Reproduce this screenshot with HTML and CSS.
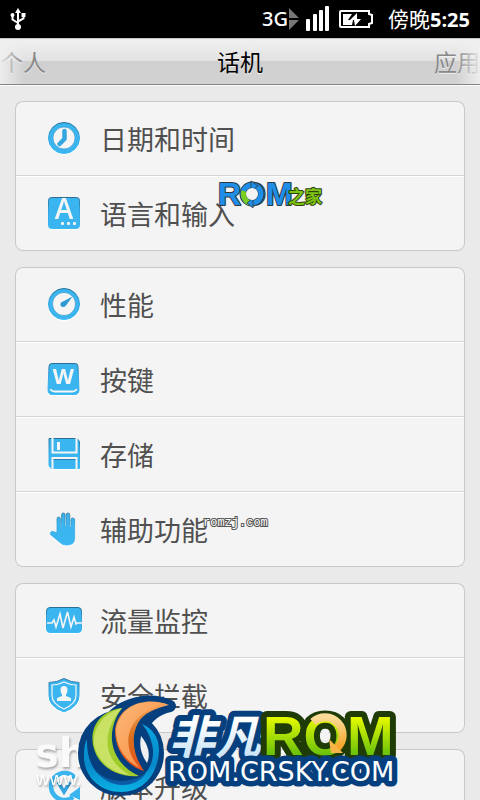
FILE: index.html
```
<!DOCTYPE html>
<html lang="zh-CN">
<head>
    <meta charset="utf-8">
    <meta name="viewport" content="width=device-width, initial-scale=1">
    <title>话机</title>
    <link rel="stylesheet" href="styles.css">
</head>
<body>
    <!-- shared gradients -->
    <svg class="defs" width="0" height="0" aria-hidden="true">
        <defs>
            <linearGradient id="edge" x1="0" y1="0" x2="0" y2="1">
                <stop offset="0" stop-color="#2b6f95"/>
                <stop offset="0.4" stop-color="#35a3da"/>
                <stop offset="1" stop-color="#3cbaf5"/>
            </linearGradient>
            <linearGradient id="lime" x1="0" y1="0" x2="0" y2="1">
                <stop offset="0.2" stop-color="#e9fb00"/>
                <stop offset="0.85" stop-color="#5fbd0c"/>
            </linearGradient>
            <linearGradient id="ice" x1="0" y1="0" x2="0" y2="1">
                <stop offset="0.3" stop-color="#ffffff"/>
                <stop offset="1" stop-color="#b9dcf5"/>
            </linearGradient>
            <linearGradient id="orange" x1="0" y1="0" x2="0" y2="1">
                <stop offset="0" stop-color="#f8a860"/>
                <stop offset="0.5" stop-color="#d8701c"/>
                <stop offset="1" stop-color="#e8501c"/>
            </linearGradient>
            <linearGradient id="peach" x1="0" y1="0" x2="1" y2="1">
                <stop offset="0" stop-color="#fbb878"/>
                <stop offset="1" stop-color="#f98a3c"/>
            </linearGradient>
            <linearGradient id="ring" x1="0" y1="0" x2="0" y2="1">
                <stop offset="0" stop-color="#08a4de"/>
                <stop offset="0.6" stop-color="#0789cb"/>
                <stop offset="1" stop-color="#0bb2e4"/>
            </linearGradient>
            <linearGradient id="gold" x1="0" y1="0" x2="0" y2="1">
                <stop offset="0" stop-color="#fbdc98"/>
                <stop offset="1" stop-color="#f3a425"/>
            </linearGradient>
        </defs>
    </svg>

    <div class="screen">
        <header class="status-bar">
            <svg class="usb" width="16" height="22" viewBox="0 0 16 22" aria-label="USB">
                <g fill="none" stroke="#fff" stroke-width="2">
                    <path d="M8 3v16"/>
                    <path d="M2.500 8v3.500L8 15M13.500 7v3.500L8 13.500"/>
                </g>
                <path d="M8 0l3 5H5z" fill="#fff"/>
                <circle cx="8" cy="19" r="3" fill="#fff"/>
                <circle cx="2.500" cy="7" r="2" fill="#fff"/>
                <path d="M11.500 5h4v4h-4z" fill="#fff"/>
            </svg>
            <div class="status-right">
                <span class="network">3G</span>
                <svg class="arrows" width="10" height="22" viewBox="0 0 10 22" aria-hidden="true">
                    <path d="M0 0l10 10H0zM0 12h10L0 22z" fill="#777"/>
                </svg>
                <svg class="signal" width="24" height="26" viewBox="0 0 24 26" aria-hidden="true">
                    <g fill="#fff">
                        <rect x="0" y="13" width="4" height="12" rx="1"/>
                        <rect x="7" y="8" width="4" height="17" rx="1"/>
                        <rect x="13" y="4" width="4" height="21" rx="1"/>
                        <rect x="19" y="0" width="4" height="25" rx="1"/>
                    </g>
                </svg>
                <svg class="battery" width="34" height="18" viewBox="0 0 34 18" aria-hidden="true">
                    <path d="M2 1h28v3l3 1v8l-3 1v3H2q-1 0-1-1V2q0-1 1-1z" fill="#000" stroke="#fff" stroke-width="2"/>
                    <path d="M4 4h9l-4 6h5l-1 5H4z" fill="#fff"/>
                    <path d="M18 3l-7 7h4l1 6 6-7h-4z" fill="#fff"/>
                </svg>
                <span class="clock">傍晚<b>5:25</b></span>
            </div>
        </header>

        <nav class="tabs">
            <button class="tab" type="button">个人</button>
            <button class="tab active" type="button">话机</button>
            <button class="tab" type="button">应用</button>
        </nav>

        <main class="settings">
            <section class="group">
                <a class="row" href="#datetime">
                    <svg class="icon" viewBox="0 0 36 36" aria-hidden="true">
                        <circle cx="18" cy="18" r="15.500" fill="#3ab5f0" stroke="url(#edge)"/>
                        <circle cx="18" cy="18" r="11" fill="#f5f5f5" stroke="#318fc0" stroke-width="0.600"/>
                        <path d="M18.500 11v8l-5 5" fill="none" stroke="#35a6e0" stroke-width="4.500" stroke-linecap="round" stroke-linejoin="round"/>
                    </svg>
                    <span class="label">日期和时间</span>
                </a>
                <a class="row" href="#language">
                    <svg class="icon" viewBox="0 0 36 36" aria-hidden="true">
                        <rect x="2.500" y="2.500" width="31" height="31" rx="3" fill="#3ab5f0" stroke="url(#edge)"/>
                        <text x="18" y="24" class="icon-letter">A</text>
                        <g fill="#f5f5f5">
                            <rect x="15" y="27" width="3" height="3" rx="1"/>
                            <rect x="21" y="27" width="3" height="3" rx="1"/>
                            <rect x="27" y="27" width="3" height="3" rx="1"/>
                        </g>
                    </svg>
                    <span class="label">语言和输入</span>
                </a>
            </section>

            <section class="group">
                <a class="row" href="#performance">
                    <svg class="icon" viewBox="0 0 36 36" aria-hidden="true">
                        <circle cx="18" cy="18" r="15.500" fill="#3ab5f0" stroke="url(#edge)"/>
                        <circle cx="18" cy="18" r="11.500" fill="#f5f5f5" stroke="#318fc0" stroke-width="0.600"/>
                        <path d="M26.500 10.500L20 19.500q-2.500 2.500-4.500 1t-.500-4z" fill="#309bd2"/>
                    </svg>
                    <span class="label">性能</span>
                </a>
                <a class="row" href="#keys">
                    <svg class="icon" viewBox="0 0 36 36" aria-hidden="true">
                        <path d="M6 2.500h23q3 0 3 3l1 23q0 5-4 5H6q-4 0-4-5l1-23q0-3 3-3z" fill="#3ab5f0" stroke="url(#edge)"/>
                        <path d="M4.500 28q1 2.500 4 2.500h18q3 0 4-2.500" fill="none" stroke="#f5f5f5" stroke-width="1.800"/>
                        <text x="17.500" y="23" class="icon-letter small">W</text>
                    </svg>
                    <span class="label">按键</span>
                </a>
                <a class="row" href="#storage">
                    <svg class="icon" viewBox="0 0 36 36" aria-hidden="true">
                        <path d="M5 2.500h26l2.500 3v27H5l-2-3v-27z" fill="#3ab5f0" stroke="url(#edge)"/>
                        <path d="M6.500 2v14.500h24V2" fill="none" stroke="#f5f5f5" stroke-width="2"/>
                        <rect x="11" y="6" width="3" height="8" fill="#f5f5f5"/>
                        <path d="M6.500 34V22h24v12" fill="none" stroke="#f5f5f5" stroke-width="2"/>
                        <path d="M7.500 23.500h22" stroke="#2b7fab"/>
                    </svg>
                    <span class="label">存储</span>
                </a>
                <a class="row" href="#accessibility">
                    <svg class="icon" viewBox="0 0 36 36" aria-hidden="true">
                        <path d="M11 21V8q0-2 1.700-2T14.400 8v8h1.200V4q0-2 1.700-2T19 4v11.500h1.200V4q0-2 1.800-2t1.800 2v12.500H25V9q0-2 1.800-2t1.800 2v18q0 7-7 7h-2q-3 0-5-2L5 24q-1.500-2 0-3 2-1.500 4 .5z" fill="#3ab5f0" stroke="url(#edge)" stroke-width="0.800"/>
                    </svg>
                    <span class="label">辅助功能</span>
                </a>
            </section>

            <section class="group">
                <a class="row" href="#traffic">
                    <svg class="icon" viewBox="0 0 36 36" aria-hidden="true">
                        <rect x="0.500" y="5.500" width="35" height="25" rx="3.500" fill="#3ab5f0" stroke="url(#edge)"/>
                        <path d="M1 21h5l2-3 2 7 4-13 3 14 4.500-16 3.500 15 3-10 2 7 1-1h5" fill="none" stroke="#f5f5f5" stroke-width="1.600"/>
                    </svg>
                    <span class="label">流量监控</span>
                </a>
                <a class="row" href="#security">
                    <svg class="icon" viewBox="0 0 36 36" aria-hidden="true">
                        <path d="M18 1.500q7 4 15 4v13q0 11-15 16.500Q3 29.500 3 18.500v-13q8 0 15-4z" fill="#3ab5f0" stroke="url(#edge)"/>
                        <path d="M18 5q6 3 12 3v10.500q0 8.500-12 13.500-12-5-12-13.500V8q6 0 12-3z" fill="none" stroke="#f5f5f5" stroke-width="1.200"/>
                        <path d="M18 9q3.500 0 3.500 4 0 3-1.500 4v2l5 2v3H11v-3l5-2v-2q-1.500-1-1.500-4 0-4 3.500-4z" fill="#f5f5f5"/>
                    </svg>
                    <span class="label">安全拦截</span>
                </a>
            </section>

            <section class="group">
                <a class="row" href="#update">
                    <svg class="icon" viewBox="0 0 36 36" aria-hidden="true">
                        <path d="M29 10A13.500 13.500 0 1 0 27 29" fill="none" stroke="#3ab5f0" stroke-width="4.500"/>
                        <path d="M34 19v13l-11-5z" fill="#3ab5f0"/>
                        <path d="M12 14l6 10 6-10" fill="none" stroke="#35a6e0" stroke-width="3.500"/>
                    </svg>
                    <span class="label">版本升级</span>
                </a>
            </section>
        </main>

        <svg class="mark mark-romzj" width="112" height="32" viewBox="0 0 112 32">
            <text x="3" y="26" class="romzj-latin">ROM</text>
            <circle cx="37" cy="15" r="9" fill="none" stroke="#2f3a40" stroke-width="7"/>
            <circle cx="37" cy="15" r="9" fill="none" stroke="#1e8ee8" stroke-width="5"/>
            <path d="M29 12a9 9 0 0 0 7 12" fill="none" stroke="#79cf1b" stroke-width="5"/>
            <path d="M36 2l7 5-7 5zM38 19v10l-6-5z" fill="#1e8ee8" stroke="#2f3a40" stroke-width="0.800"/>
            <circle cx="37" cy="15" r="6" fill="#f4f4f4"/>
            <text x="73" y="24" class="romzj-han">之家</text>
        </svg>

        <span class="mark mark-url">romzj.com</span>

        <svg class="mark mark-sh" width="60" height="60" viewBox="0 0 60 60">
            <text x="0" y="36" class="sh-big">sh</text>
            <text x="1" y="54" class="sh-small">www.</text>
        </svg>

        <svg class="mark mark-crsky" width="330" height="110" viewBox="77 690 330 110">
            <!-- emblem -->
            <g fill="#063f7d" stroke="#063f7d" stroke-width="12" stroke-linejoin="round">
                <circle cx="121" cy="753" r="37"/>
                <path d="M170 706C150 697 122 702 108 722l34 6q8-18 28-22z"/>
            </g>
            <path d="M142 724C152 728 159 737 159 750 158 775 143 792 121 792 99 792 83 775 84 755 84 748 85 743 87 739 86 766 100 783 121 783 142 783 154 768 153 750 152 740 148 731 142 724z" fill="url(#ring)"/>
            <path d="M96 770C106 783 130 785 146 773 136 789 108 790 96 770z" fill="#0a5ca6"/>
            <path d="M122 708C99 711 90 728 93 745 97 766 117 778 139 776 121 768 113 753 112 740 111 728 116 716 122 708z" fill="#a0cc2c"/>
            <path d="M122 708C103 713 93 728 94 744 98 762 113 774 130 775 106 763 98 735 122 708z" fill="#c9e265"/>
            <path d="M169 705C150 697 119 702 115 730 115 752 128 766 144 771 134 757 130 738 138 723 143 713 156 708 169 705z" fill="url(#orange)"/>
            <path d="M166 704C146 698 120 705 116 730 116 748 126 761 140 768 120 748 124 713 166 704z" fill="url(#peach)"/>
            <path d="M141 736C148 744 151 755 147 763 141 754 139 746 141 736z" fill="#eef0f2"/>
            <!-- lettering -->
            <text x="169" y="754" class="crsky-han">非凡</text>
            <text x="263" y="755" class="crsky-rom">ROM</text>
            <circle cx="325" cy="736" r="5" fill="#f4f4f4"/>
            <path d="M313 722A17 17 0 0 1 337 748" fill="none" stroke="url(#gold)" stroke-width="8"/>
            <path d="M329 739l2 14h12z" fill="#f6b546"/>
            <text x="168" y="781" class="crsky-url">ROM.CRSKY.COM</text>
        </svg>
    </div>
</body>
</html>
```
FILE: styles.css
```
* {
    box-sizing: border-box;
}
body {
    margin: 0;
    background: #eaeaea;
    color: #505050;
    font-family: "Open Sans", "Noto Sans CJK SC", sans-serif;
}
.defs {
    position: absolute;
}
.screen {
    position: relative;
    height: 100vh;
    overflow: hidden;
}
.status-bar {
    display: flex;
    justify-content: space-between;
    align-items: center;
    height: 38px;
    padding: 0 10px;
    background: #000;
    color: #fff;
    font-size: 20px;
    line-height: 38px;
}
.status-right {
    display: flex;
    align-items: center;
}
.network {
    font-family: "Noto Sans", sans-serif;
    font-size: 20px;
    font-weight: 500;
}
.arrows {
    margin: 0 7px 0 1px;
}
.signal {
    margin-right: 9px;
}
.battery {
    margin-right: 15px;
}
.clock {
    font-size: 21px;
}
.clock b {
    font-size: 20px;
}
.tabs {
    position: relative;
    display: flex;
    justify-content: space-between;
    height: 47px;
    border-top: 1px solid #c4c4c4;
    border-bottom: 1px solid #858585;
    background: linear-gradient(#f0f0f0, #e2e2e2 50%, #d0d0d0 50%, #d2d2d2);
    box-shadow: 0 1px 0 #fafafa;
}
.tabs::before, .tabs::after {
    content: "";
    position: absolute;
    top: 0;
    bottom: 0;
    width: 24px;
    pointer-events: none;
}
.tabs::before {
    left: 0;
    background: linear-gradient(to right, rgba(240, 240, 240, 0.9), rgba(240, 240, 240, 0));
}
.tabs::after {
    right: 0;
    background: linear-gradient(to left, rgba(240, 240, 240, 0.9), rgba(240, 240, 240, 0));
}
.tab {
    padding: 0;
    border: none;
    background: none;
    color: #888;
    font-family: inherit;
    font-size: 23px;
    line-height: 46px;
    text-shadow: 0 1px 0 #f0f0f0;
    cursor: pointer;
}
.tab.active {
    color: #000;
}
.settings {
    display: flex;
    flex-direction: column;
    gap: 16px;
    padding: 16px 15px;
}
.group {
    padding: 0 1px;
    border-radius: 8px;
    background: #f4f4f4;
    box-shadow: inset 0 0 0 1px #c8c8c8;
}
.row {
    display: flex;
    align-items: center;
    gap: 18px;
    height: 75px;
    padding-left: 30px;
    border-bottom: 1px solid #d4d4d4;
    color: #505050;
    font-size: 27px;
    line-height: 40px;
    text-decoration: none;
}
.row:last-child {
    border-bottom-color: transparent;
}
.row + .row {
    box-shadow: inset 0 1px 0 #fff;
}
.label {
    padding-top: 4px;
}
.icon {
    width: 36px;
    height: 36px;
    filter: drop-shadow(0 1px 0 #fff);
}
.icon-letter {
    fill: #f5f5f5;
    font-family: "Open Sans", sans-serif;
    font-size: 28px;
    font-weight: 600;
    text-anchor: middle;
}
.icon-letter.small {
    font-size: 22px;
    font-weight: 700;
}

/* logos lying over the list */
.mark {
    position: absolute;
    pointer-events: none;
}
.mark text {
    paint-order: stroke;
    stroke-linejoin: round;
}
.mark-romzj {
    left: 215px;
    top: 179px;
}
.romzj-latin {
    fill: #1e8ee8;
    stroke: #2f3a40;
    stroke-width: 2px;
    font: bold 32px "Liberation Sans", sans-serif;
}
.romzj-han {
    fill: #7cc414;
    stroke: #33420f;
    stroke-width: 2px;
    font: bold 17px "Noto Sans CJK SC", sans-serif;
}
.mark-url {
    left: 203px;
    top: 515px;
    color: #fff;
    font: 12px/16px "Liberation Mono", monospace;
    -webkit-text-stroke: 2px #555;
    paint-order: stroke;
}
.mark-sh {
    left: 35px;
    top: 731px;
    filter: drop-shadow(1px 2px 1px rgba(0, 0, 0, 0.3));
}
.sh-big {
    fill: #fafafa;
    font: bold 40px "DejaVu Sans", sans-serif;
}
.sh-small {
    fill: #fff;
    font: 19px "Liberation Sans", sans-serif;
}
.mark-crsky {
    left: 77px;
    top: 690px;
}
.crsky-han {
    fill: url(#ice);
    stroke: #063f7d;
    stroke-width: 12px;
    font: italic bold 46px "Noto Sans CJK SC", sans-serif;
}
.crsky-rom {
    fill: url(#lime);
    stroke: #1f3b06;
    stroke-width: 12px;
    font: bold 56px "Liberation Sans", sans-serif;
}
.crsky-url {
    fill: #fff;
    stroke: #063f7d;
    stroke-width: 11px;
    font: 27px "DejaVu Sans", sans-serif;
}
```
